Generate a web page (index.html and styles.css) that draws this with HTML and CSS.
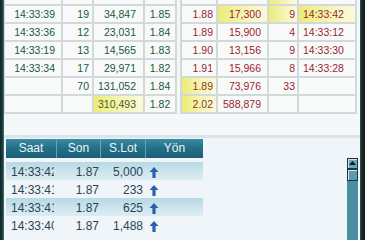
FILE: index.html
```html
<!DOCTYPE html>
<html>
<head>
<meta charset="utf-8">
<link rel="stylesheet" href="styles.css">
</head>
<body>
<div class="frame">
  <div class="edge-left"></div>
  <div class="main">
    <section class="top">
      <div class="grid grid-left">
        <div class="c t g"></div><div class="c n g"></div><div class="c q g"></div><div class="c p g"></div>
        <div class="c t g">14:33:39</div><div class="c n g">19</div><div class="c q g">34,847</div><div class="c p g">1.85</div>
        <div class="c t g">14:33:36</div><div class="c n g">12</div><div class="c q g">23,031</div><div class="c p g">1.84</div>
        <div class="c t g">14:33:19</div><div class="c n g">13</div><div class="c q g">14,565</div><div class="c p g">1.83</div>
        <div class="c t g">14:33:34</div><div class="c n g">17</div><div class="c q g">29,971</div><div class="c p g">1.82</div>
        <div class="c t g"></div><div class="c n g">70</div><div class="c q g">131,052</div><div class="c p g">1.84</div>
        <div class="c t g"></div><div class="c n g"></div><div class="c q o hl">310,493</div><div class="c p g">1.82</div>
      </div>
      <div class="grid grid-right">
        <div class="c rp r"></div><div class="c rq r"></div><div class="c rn r hl"></div><div class="c rt r"></div>
        <div class="c rp r">1.88</div><div class="c rq r hl">17,300</div><div class="c rn r hl">9</div><div class="c rt r hl">14:33:42</div>
        <div class="c rp r">1.89</div><div class="c rq r">15,900</div><div class="c rn r">4</div><div class="c rt r">14:33:12</div>
        <div class="c rp r">1.90</div><div class="c rq r">13,156</div><div class="c rn r">9</div><div class="c rt r">14:33:30</div>
        <div class="c rp r">1.91</div><div class="c rq r">15,966</div><div class="c rn r">8</div><div class="c rt r">14:33:28</div>
        <div class="c rp b hl">1.89</div><div class="c rq r">73,976</div><div class="c rn r">33</div><div class="c rt r"></div>
        <div class="c rp b hl">2.02</div><div class="c rq r">588,879</div><div class="c rn r"></div><div class="c rt r"></div>
      </div>
    </section>
    <div class="divider"></div>
    <section class="bottom">
      <div class="trades">
        <div class="thead">
          <div class="th">Saat</div><div class="th">Son</div><div class="th">S.Lot</div><div class="th">Yön</div>
        </div>
        <div class="tr alt">
          <div class="td time">14:33:42</div><div class="td num">1.87</div><div class="td lot">5,000</div>
          <div class="td dir"><svg class="up" viewBox="0 0 10 11" width="10" height="11"><path d="M5 0 L9.5 5 L6.6 5 L6.6 11 L3.4 11 L3.4 5 L0.5 5 Z"/></svg></div>
        </div>
        <div class="tr">
          <div class="td time">14:33:41</div><div class="td num">1.87</div><div class="td lot">233</div>
          <div class="td dir"><svg class="up" viewBox="0 0 10 11" width="10" height="11"><path d="M5 0 L9.5 5 L6.6 5 L6.6 11 L3.4 11 L3.4 5 L0.5 5 Z"/></svg></div>
        </div>
        <div class="tr alt">
          <div class="td time">14:33:41</div><div class="td num">1.87</div><div class="td lot">625</div>
          <div class="td dir"><svg class="up" viewBox="0 0 10 11" width="10" height="11"><path d="M5 0 L9.5 5 L6.6 5 L6.6 11 L3.4 11 L3.4 5 L0.5 5 Z"/></svg></div>
        </div>
        <div class="tr">
          <div class="td time">14:33:40</div><div class="td num">1.87</div><div class="td lot">1,488</div>
          <div class="td dir"><svg class="up" viewBox="0 0 10 11" width="10" height="11"><path d="M5 0 L9.5 5 L6.6 5 L6.6 11 L3.4 11 L3.4 5 L0.5 5 Z"/></svg></div>
        </div>
      </div>
      <div class="spacer"></div>
      <div class="scrollbar">
        <div class="sb-btn"><svg viewBox="0 0 9 9" width="9" height="9"><path d="M1 6 L4.5 2 L8 6 Z"/></svg></div>
        <div class="sb-thumb"></div>
        <div class="sb-track"></div>
      </div>
    </section>
  </div>
  <div class="edge-right"></div>
</div>
</body>
</html>
```

FILE: styles.css
```css
html, body {
  margin: 0;
  padding: 0;
}
body {
  width: 365px;
  height: 240px;
  overflow: hidden;
  background: #eff5f8;
  font-family: "Liberation Sans", Arial, sans-serif;
}
.frame {
  display: flex;
  width: 365px;
  height: 240px;
}
.edge-left {
  width: 4px;
  background: linear-gradient(to right, #0f2526, #1d4244 70%, #5b7f84);
}
.edge-right {
  width: 5px;
  background: linear-gradient(to right, #3c5356, #172628 40%, #111c1d);
}
.main {
  flex: 1;
  display: flex;
  flex-direction: column;
  min-width: 0;
}
.top {
  height: 135px;
  display: flex;
  align-items: flex-start;
  background: #f5f8f9;
  overflow: hidden;
}
.grid {
  display: grid;
  grid-auto-rows: 16px;
  gap: 2px;
  background: #d3d9d9;
  margin-top: -12px;
  padding-bottom: 2px;
}
.grid-left {
  grid-template-columns: 56px 29px 49px 30px;
  padding-left: 1px;
  padding-right: 2px;
}
.grid-right {
  grid-template-columns: 34px 49px 28px 56px;
  padding-left: 2px;
  padding-right: 2px;
  margin-left: 3px;
}
.c {
  background: #f8fafa;
  font-size: 10.5px;
  line-height: 16px;
  white-space: nowrap;
  overflow: hidden;
}
.g { color: #22573a; }
.r { color: #9a1f30; }
.o { color: #4d5a1c; }
.b { color: #8c3a22; }
.hl {
  background: linear-gradient(to right, #ecec78, #f6f6bc 60%, #fafadc);
}
.t { text-align: right; padding-right: 6px; }
.n { text-align: right; padding-right: 3px; }
.q { text-align: right; padding-right: 7px; }
.p { text-align: center; }
.rp { text-align: right; padding-right: 3px; }
.rq { text-align: right; padding-right: 6px; }
.rn { text-align: right; padding-right: 2px; }
.rt { text-align: left; padding-left: 4px; }

.divider {
  height: 3px;
  background: #dbe4e8;
}
.bottom {
  flex: 1;
  display: flex;
  align-items: flex-start;
  background: #eff5f8;
}
.trades {
  width: 197px;
  margin-left: 2px;
  padding-top: 1px;
}
.thead {
  display: grid;
  grid-template-columns: 50px 44px 45px 58px;
  height: 19px;
  background: linear-gradient(#3b8ba3, #24718a 45%, #1b5d74);
  margin-bottom: 4px;
}
.th {
  color: #eef5f7;
  font-size: 12px;
  line-height: 19px;
  text-align: center;
  border-left: 1px solid #6aa2b3;
}
.th:first-child { border-left: none; }
.tr {
  display: grid;
  grid-template-columns: 48px 46px 45px 58px;
  height: 18px;
}
.tr.alt {
  background: linear-gradient(#b7d8e3, #cfe6ee 60%, #dcedf2);
}
.td {
  color: #2c4556;
  font-size: 12px;
  line-height: 20px;
  height: 18px;
  white-space: nowrap;
  overflow: hidden;
}
.time { padding-left: 5px; text-overflow: clip; }
.num { text-align: right; padding-right: 1px; }
.lot { text-align: right; padding-right: 2px; }
.dir { padding-left: 4px; }
.up {
  display: block;
  margin-top: 5px;
  fill: #2d5fae;
}
.spacer { flex: 1; }
.scrollbar {
  width: 11px;
  margin-top: 20px;
  margin-right: 2px;
  align-self: stretch;
  display: flex;
  flex-direction: column;
  background: #4a8ea1;
}
.sb-btn {
  height: 11px;
  box-sizing: border-box;
  border: 1px solid #163843;
  background: #6ea7b8;
  box-shadow: inset 1px 1px 0 #cfe5ec;
  display: flex;
  align-items: center;
  justify-content: center;
}
.sb-btn svg { fill: #0c1a1f; }
.sb-thumb {
  height: 12px;
  box-sizing: border-box;
  border: 1px solid #163843;
  background: #5a9bae;
  box-shadow: inset 1px 1px 0 #d5e8ee;
}
.sb-track { flex: 1; }
```
